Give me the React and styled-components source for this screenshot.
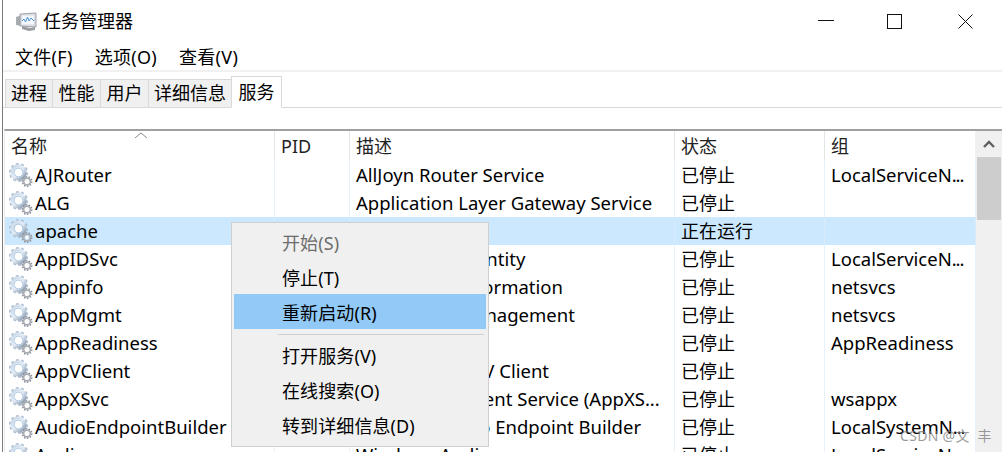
import React from "react";
import styled, { createGlobalStyle } from "styled-components";

const Global = createGlobalStyle`
  html, body { margin: 0; padding: 0; background: #fff; }
  * { box-sizing: border-box; }
`;

const FONT = `"Noto Sans", "Noto Sans CJK SC", sans-serif`;

const Win = styled.div`
  position: relative;
  width: 1002px;
  height: 452px;
  overflow: hidden;
  background: #fff;
  color: #000;
  font-family: ${FONT};
  font-size: 18px;
  border-left: 2px solid #fff;
`;
const Frame = styled.div`
  height: 100%;
  border-left: 1px solid #7c7c7c;
  display: flex;
  flex-direction: column;
`;
const TitleBar = styled.div`
  height: 42px;
  flex: none;
  display: flex;
  align-items: center;
  padding-left: 12px;
  gap: 4px;
`;
const TitleText = styled.span`
  font-size: 18px;
  line-height: 24px;
  flex: 1;
`;
const WinBtn = styled.div`
  width: 71px;
  height: 42px;
  padding-left: ${p => p.$shift || 0}px;
  display: flex;
  align-items: center;
  justify-content: center;
`;
const WinBtns = styled.div`
  display: flex;
  margin-right: 1px;
`;
const MenuBar = styled.div`
  height: 30px;
  flex: none;
  display: flex;
  align-items: center;
  gap: 22px;
  padding: 2px 0 0 12px;
  border-bottom: 2px solid #f1f1f1;
`;
const MenuItem = styled.span`
  font-size: 18px;
  letter-spacing: .3px;
  line-height: 24px;
`;
const TabStrip = styled.div`
  height: 36px;
  flex: none;
  display: flex;
  align-items: flex-end;
  padding-left: 2px;
  border-bottom: 1px solid #d9d9d9;
`;
const Tab = styled.div`
  height: ${p => (p.$active ? "32px" : "29px")};
  width: ${p => p.$w}px;
  margin-bottom: -1px;
  padding-bottom: 3px;
  display: flex;
  align-items: center;
  justify-content: center;
  font-size: 18px;
  background: ${p => (p.$active ? "#fff" : "#f0f0f0")};
  border: 1px solid #d9d9d9;
  border-right-width: ${p => (p.$active ? "1px" : "0")};
  border-bottom-color: ${p => (p.$active ? "#fff" : "#d9d9d9")};
`;
const Gap = styled.div`
  height: 21px;
  flex: none;
`;
const ListWrap = styled.div`
  flex: 1;
  min-height: 0;
  display: flex;
  border-top: 2px solid #a0a0a0;
  margin-left: 1px;
  border-left: 1px solid #ececec;
`;
const Table = styled.div`
  flex: none;
  width: 971px;
  display: flex;
  flex-direction: column;
`;
const Row = styled.div`
  display: grid;
  grid-template-columns: 270px 75px 325px 150px 151px;
  height: 28px;
  flex: none;
  background: ${p => (p.$sel ? "#cce8ff" : "#fff")};
`;
const Head = styled(Row)`
  height: 30px;
`;
const HeadCell = styled.div`
  position: relative;
  padding: 1px 0 0 6px;
  border-right: 1px solid #e5e5e5;
  font-size: 18px;
  line-height: 28px;
  color: #222;
  &:last-child { border-right-color: #f0f0f0; }
`;
const Caret = styled.svg`
  position: absolute;
  left: 129px;
  top: 1px;
`;
const Cell = styled.div`
  display: flex;
  align-items: center;
  gap: 2px;
  padding-left: ${p => (p.$name ? "2px" : "6px")};
  border-right: 1px solid ${p => (p.$sel ? "#d9ebfb" : "#e6f1fc")};
  font-size: ${p => (p.$cjk ? "18px" : "18.5px")};
  line-height: 28px;
  white-space: pre;
  overflow: hidden;
`;
const Dots = styled.span`
  letter-spacing: -1.1px;
`;
const Scrollbar = styled.div`
  flex: none;
  width: 26px;
  background: #f0f0f0;
  display: flex;
  flex-direction: column;
  align-items: stretch;
`;
const ScrollArrow = styled.div`
  height: 26px;
  display: flex;
  align-items: center;
  justify-content: center;
`;
const Thumb = styled.div`
  height: 63px;
  width: 24px;
  margin-left: 1px;
  background: #cdcdcd;
`;
const Menu = styled.div`
  position: absolute;
  left: 229px;
  top: 222px;
  width: 258px;
  height: 225px;
  padding: 1px 2px;
  background: #f0f0f0;
  border: 1px solid #cfcfcf;
`;
const MI = styled.div`
  height: 35px;
  padding-left: 48px;
  display: flex;
  align-items: center;
  font-size: 18px;
  letter-spacing: .1px;
  color: ${p => (p.$off ? "#6d6d6d" : "#000")};
  background: ${p => (p.$hot ? "#91c9f7" : "transparent")};
`;
const Sep = styled.div`
  height: 1px;
  margin: 5px 2px 2px 44px;
  background: #d0d0d0;
`;
const Watermark = styled.div`
  position: absolute;
  left: 898px;
  top: 427px;
  font-size: 14px;
  line-height: 18px;
  letter-spacing: .3px;
  white-space: pre;
  color: rgba(120,120,120,.75);
`;

const GearIcon = () => (
  <svg width="26" height="26" viewBox="0 0 26 26" style={{ flex: "none" }}>
    <defs>
      <linearGradient id="gg" x1="0" y1="0" x2="1" y2="1">
        <stop offset="0" stopColor="#c8d6e6" />
        <stop offset=".5" stopColor="#e3ecf5" />
        <stop offset="1" stopColor="#7f93a8" />
      </linearGradient>
    </defs>
    <circle cx="11.5" cy="10.5" r="8" fill="none" stroke="#a9bccf" strokeWidth="3" strokeDasharray="2.6 2.4" />
    <circle cx="11.5" cy="10.5" r="6.6" fill="none" stroke="url(#gg)" strokeWidth="3.4" />
    <circle cx="11.5" cy="10.5" r="4.4" fill="#fff" stroke="#6fa0cf" strokeWidth=".6" />
    <circle cx="20" cy="19.5" r="4.7" fill="none" stroke="#8a9099" strokeWidth="1.6" strokeDasharray="1.5 1.4" />
    <circle cx="20" cy="19.5" r="3.4" fill="none" stroke="#a8adb4" strokeWidth="1.8" />
    <circle cx="20" cy="19.5" r="1.4" fill="#fff" />
  </svg>
);

const AppIcon = () => (
  <svg width="24" height="24" viewBox="0 0 24 24" style={{ flex: "none" }}>
    <path d="M1 8l6-2v11l-6 -1z" fill="#a9adb2" />
    <path d="M7 17l8 2 5-1 0 3-6 1-7-2z" fill="#9a9da1" />
    <path d="M5 5l16-1v14l-16-1z" fill="#d9dde2" stroke="#8d9299" strokeWidth=".8" />
    <rect x="7" y="6.5" width="12" height="9" fill="#f4f8fc" />
    <path d="M7 12l2-2 1.5 3 2-5 1.5 4 2-3 3 3" fill="none" stroke="#4f93d6" strokeWidth="1" />
  </svg>
);

const rows = [
  ["AJRouter", "AllJoyn Router Service", "已停止", "LocalServiceN", true],
  ["ALG", "Application Layer Gateway Service", "已停止", ""],
  ["apache", "", "正在运行", ""],
  ["AppIDSvc", "Application Identity", "已停止", "LocalServiceN", true],
  ["Appinfo", "Application Information", "已停止", "netsvcs"],
  ["AppMgmt", "Application Management", "已停止", "netsvcs"],
  ["AppReadiness", "App Readiness", "已停止", "AppReadiness"],
  ["AppVClient", "Microsoft App-V Client", "已停止", ""],
  ["AppXSvc", "AppX Deployment Service (AppXS...", "已停止", "wsappx"],
  ["AudioEndpointBuilder", "Windows Audio Endpoint Builder", "已停止", "LocalSystemN", true],
  ["Audiosrv", "Windows Audio", "已停止", "LocalServiceN", true],
];

const tabs = [["进程", 47], ["性能", 48], ["用户", 48], ["详细信息", 83], ["服务", 51]];

export default function App() {
  return (
    <Win>
      <Global />
      <Frame>
        <TitleBar>
          <AppIcon />
          <TitleText>任务管理器</TitleText>
          <WinBtns>
            <WinBtn $shift={5}>
              <svg width="16" height="2"><rect width="16" height="1" fill="#111" /></svg>
            </WinBtn>
            <WinBtn>
              <svg width="15" height="15"><rect x=".5" y=".5" width="14" height="14" fill="none" stroke="#111" /></svg>
            </WinBtn>
            <WinBtn>
              <svg width="15" height="15"><path d="M.5.5l14 14M14.5.5l-14 14" stroke="#111" fill="none" /></svg>
            </WinBtn>
          </WinBtns>
        </TitleBar>
        <MenuBar>
          <MenuItem>文件(F)</MenuItem>
          <MenuItem>选项(O)</MenuItem>
          <MenuItem>查看(V)</MenuItem>
        </MenuBar>
        <TabStrip>
          {tabs.map(([t, w], i) => (
            <Tab key={t} $w={w} $active={i === 4}>{t}</Tab>
          ))}
        </TabStrip>
        <Gap />
        <ListWrap>
          <Table>
            <Head>
              <HeadCell>
                名称
                <Caret width="14" height="8" viewBox="0 0 14 8">
                  <path d="M1 6l6-5 6 5" fill="none" stroke="#8a8a8a" />
                </Caret>
              </HeadCell>
              <HeadCell>PID</HeadCell>
              <HeadCell>描述</HeadCell>
              <HeadCell>状态</HeadCell>
              <HeadCell>组</HeadCell>
            </Head>
            {rows.map(r => {
              const sel = r[0] === "apache";
              return (
                <Row key={r[0]} $sel={sel}>
                  <Cell $name $sel={sel}><GearIcon />{r[0]}</Cell>
                  <Cell $sel={sel} />
                  <Cell $sel={sel}>{r[1]}</Cell>
                  <Cell $sel={sel} $cjk>{r[2]}</Cell>
                  <Cell $sel={sel}><span>{r[3]}{r[4] && <Dots>...</Dots>}</span></Cell>
                </Row>
              );
            })}
          </Table>
          <Scrollbar>
            <ScrollArrow>
              <svg width="12" height="8" viewBox="0 0 12 8">
                <path d="M1 7l5-5 5 5" fill="none" stroke="#606060" strokeWidth="2.4" />
              </svg>
            </ScrollArrow>
            <Thumb />
          </Scrollbar>
        </ListWrap>
      </Frame>
      <Menu>
        <MI $off>开始(S)</MI>
        <MI>停止(T)</MI>
        <MI $hot>重新启动(R)</MI>
        <Sep />
        <MI>打开服务(V)</MI>
        <MI>在线搜索(O)</MI>
        <MI>转到详细信息(D)</MI>
      </Menu>
      <Watermark>CSDN @文  丰</Watermark>
    </Win>
  );
}
